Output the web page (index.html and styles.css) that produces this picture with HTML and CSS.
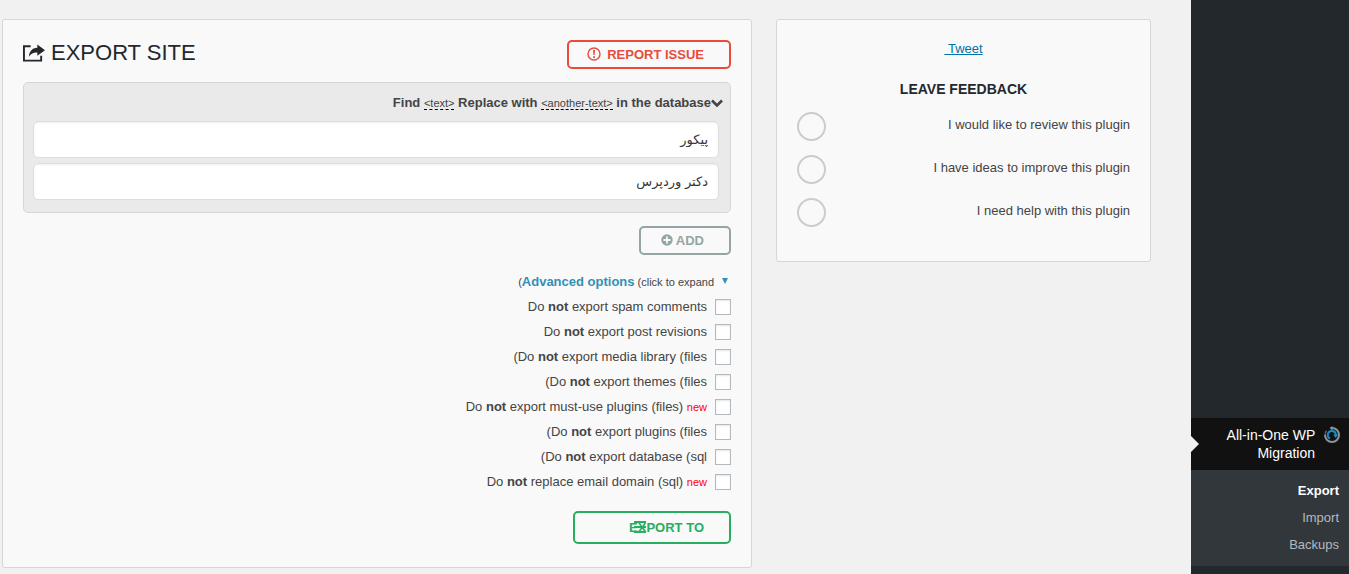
FILE: index.html
```html
<!DOCTYPE html>
<html lang="en" dir="rtl">
<head>
  <meta charset="UTF-8">
  <meta name="viewport" content="width=device-width, initial-scale=1.0">
  <title>Export Site</title>
  <link rel="stylesheet" href="styles.css">
</head>
<body>
  <nav class="admin-menu">
    <a class="menu-current" href="#">
      <svg class="menu-icon" viewBox="0 0 18 18" fill="none">
        <path d="M9 2A7 7 0 1 1 2 9" stroke="#8e9396" stroke-width="2"/>
        <path d="M9.500 0v4.500L6.500 2z" fill="#8e9396"/>
        <path d="M2 9a7 7 0 0 1 1.500-4.300" stroke="#5c6165" stroke-width="1.500"/>
        <path d="M7 12.500A4 4 0 1 1 12.800 9" stroke="#0e8fd0" stroke-width="2"/>
        <path d="M10 8.500h5.200l-2.600 3.500z" fill="#0e8fd0"/>
      </svg>
      <span>All-in-One WP Migration</span>
    </a>
    <ul class="submenu">
      <li><a class="current" href="#">Export</a></li>
      <li><a href="#">Import</a></li>
      <li><a href="#">Backups</a></li>
    </ul>
  </nav>

  <div class="content">
    <aside class="card feedback">
      <p class="share"><a href="#">Tweet&nbsp;</a></p>
      <h2>Leave Feedback</h2>
      <ul class="feedback-types">
        <li><label for="review">I would like to review this plugin</label><input type="radio" name="feedback" id="review"></li>
        <li><label for="ideas">I have ideas to improve this plugin</label><input type="radio" name="feedback" id="ideas"></li>
        <li><label for="help">I need help with this plugin</label><input type="radio" name="feedback" id="help"></li>
      </ul>
    </aside>

    <main class="card export">
      <div class="export-header">
        <h1>
          Export Site
          <svg class="share-icon" viewBox="0 0 23 18">
            <path d="M8 2H1v15h18v-5" fill="none" stroke="#23282d" stroke-width="2"/>
            <path d="M15 0l8 6-8 6V8.500C11 8.300 8.500 9.500 6.200 13 6.400 7.500 9.500 3.800 15 3.500z" fill="#23282d"/>
          </svg>
        </h1>
        <button type="button" class="btn btn-red">
          Report issue
          <svg class="alert-icon" viewBox="0 0 14 14">
            <circle cx="7" cy="7" r="6" fill="none" stroke="currentColor" stroke-width="1.400"/>
            <path d="M6 3h2l-.4 5H6.400zM6.100 9.200h1.800v1.800H6.100z" fill="currentColor"/>
          </svg>
        </button>
      </div>

      <section class="find-replace">
        <h3>
          <svg class="chevron-icon" viewBox="0 0 12 8">
            <path d="M1 1.500l5 5 5-5" fill="none" stroke="currentColor" stroke-width="2.600"/>
          </svg>
          <span dir="ltr">Find <small>&lt;text&gt;</small> Replace with <small>&lt;another-text&gt;</small> in the database</span>
        </h3>
        <input type="text" aria-label="Find" value="پیکور">
        <input type="text" aria-label="Replace with" value="دکتر وردپرس">
      </section>

      <button type="button" class="btn btn-gray">
        Add
        <svg class="plus-icon" viewBox="0 0 12 12">
          <circle cx="6" cy="6" r="5.700" fill="currentColor"/>
          <path d="M6 2.500v7M2.500 6h7" stroke="#f9f9f9" stroke-width="1.800"/>
        </svg>
      </button>

      <section class="advanced">
        <h4>
          <span class="arrow"></span>
          <span><bdi><a href="#">Advanced options</a> (click to expand</bdi>)</span>
        </h4>
        <ul>
          <li><label><input type="checkbox"><span>Do <b>not</b> export spam comments</span></label></li>
          <li><label><input type="checkbox"><span>Do <b>not</b> export post revisions</span></label></li>
          <li><label><input type="checkbox"><span><bdi>Do <b>not</b> export media library (files</bdi>)</span></label></li>
          <li><label><input type="checkbox"><span><bdi>Do <b>not</b> export themes (files</bdi>)</span></label></li>
          <li><label><input type="checkbox"><span>Do <b>not</b> export must-use plugins (files) <small>new</small></span></label></li>
          <li><label><input type="checkbox"><span><bdi>Do <b>not</b> export plugins (files</bdi>)</span></label></li>
          <li><label><input type="checkbox"><span><bdi>Do <b>not</b> export database (sql</bdi>)</span></label></li>
          <li><label><input type="checkbox"><span>Do <b>not</b> replace email domain (sql) <small>new</small></span></label></li>
        </ul>
      </section>

      <button type="button" class="btn btn-green">
        Export to
        <svg class="lines-icon" viewBox="0 0 12 12">
          <path d="M0 1h12M0 6h12M0 11h12" stroke="currentColor" stroke-width="2"/>
        </svg>
      </button>
    </main>
  </div>
</body>
</html>
```
FILE: styles.css
```css
* {
  box-sizing: border-box;
}

body {
  display: flex;
  min-height: 100vh;
  margin: 0;
  background: #f1f1f1;
  color: #444;
  font: 13px/18px "Liberation Sans", Arial, "DejaVu Sans", sans-serif;
}

h1, h2, h3, h4, p, ul {
  margin: 0;
  padding: 0;
}

ul {
  list-style: none;
}

svg {
  flex: none;
}

/* admin menu */
.admin-menu {
  display: flex;
  flex-direction: column;
  justify-content: flex-end;
  flex: none;
  width: 158px;
  padding-bottom: 8px;
  background: #23282d;
}

.admin-menu a {
  text-decoration: none;
}

.menu-current {
  position: relative;
  display: flex;
  gap: 8px;
  padding: 8px;
  background: #111;
  color: #fff;
  font-size: 14px;
}

.menu-current span {
  width: 96px;
}

.menu-current::after {
  content: "";
  position: absolute;
  left: 0;
  top: 18px;
  border: 8px solid transparent;
  border-left-color: #f1f1f1;
  border-right-width: 0;
}

.menu-icon {
  width: 18px;
  height: 18px;
}

.submenu {
  padding: 7px 10px 8px;
  background: #32373c;
}

.submenu a {
  display: block;
  color: #b4b9be;
  line-height: 27px;
}

.submenu .current {
  color: #fff;
  font-weight: bold;
}

/* content */
.content {
  display: grid;
  flex: 1;
  grid-template-columns: 1fr 2fr;
  align-items: start;
  gap: 24px;
  padding: 19px 40px 6px 2px;
}

.card {
  min-width: 0;
  padding: 20px;
  border: 1px solid #d6d6d6;
  border-radius: 3px;
  background: #f9f9f9;
}

.feedback {
  padding-bottom: 34px;
}

.share {
  text-align: center;
}

.share a {
  color: #0073aa;
}

.feedback h2 {
  margin: 22px 0 14px;
  color: #23282d;
  font-size: 14px;
  line-height: 18px;
  text-align: center;
  text-transform: uppercase;
}

.feedback-types {
  display: grid;
  gap: 14px;
}

.feedback-types li {
  display: flex;
  align-items: center;
  justify-content: space-between;
}

.feedback-types label {
  padding-bottom: 3px;
}

.feedback-types input {
  appearance: none;
  width: 29px;
  height: 29px;
  margin: 0;
  border: 2px solid #ccc;
  border-radius: 50%;
}

.export {
  display: flex;
  flex-direction: column;
  align-items: flex-start;
  padding-bottom: 23px;
}

.export-header {
  display: flex;
  flex-direction: row-reverse;
  align-self: stretch;
  justify-content: space-between;
  align-items: flex-start;
  margin-bottom: 13px;
}

h1 {
  display: flex;
  align-items: center;
  gap: 6px;
  color: #23282d;
  font-size: 22px;
  font-weight: normal;
  line-height: 26px;
  text-transform: uppercase;
}

.share-icon {
  width: 22px;
  height: 18px;
}

.btn {
  display: flex;
  align-items: center;
  height: 29px;
  padding: 0 25px 0 18px;
  border: 2px solid;
  border-radius: 5px;
  background: transparent;
  font: bold 13px "Liberation Sans", Arial, sans-serif;
  text-transform: uppercase;
}

.btn svg {
  margin-bottom: 2px;
}

.btn-red {
  gap: 6px;
  color: #e74c3c;
}

.btn-gray {
  gap: 3px;
  padding-left: 20px;
  color: #95a5a6;
}

.btn-green {
  position: relative;
  height: 33px;
  padding-left: 54px;
  color: #27ae60;
}

.alert-icon {
  width: 14px;
  height: 14px;
}

.plus-icon {
  width: 12px;
  height: 12px;
}

.lines-icon {
  position: absolute;
  left: 59px;
  top: 8px;
  width: 12px;
  height: 12px;
}

.find-replace {
  display: grid;
  align-self: stretch;
  gap: 5px;
  margin-bottom: 13px;
  padding: 11px 11px 12px 9px;
  border: 1px solid #d6d6d6;
  border-radius: 5px;
  background: #eaeaea;
}

.find-replace h3 {
  display: flex;
  align-items: center;
  margin: 0 -4px 4px 0;
  font-size: 13px;
  line-height: 18px;
}

.find-replace small {
  border-bottom: 1px dashed #000;
  font-size: 11px;
  font-weight: normal;
}

.chevron-icon {
  width: 12px;
  height: 8px;
}

.find-replace input {
  width: 100%;
  height: 37px;
  padding: 0 10px;
  border: 1px solid #ddd;
  border-radius: 5px;
  background: #fff;
  box-shadow: inset 0 1px 2px rgba(0, 0, 0, 0.07);
  color: #32373c;
  font: 13px "Liberation Sans", "DejaVu Sans", sans-serif;
}

.advanced {
  margin: 18px 0 21px;
}

.advanced h4 {
  display: flex;
  align-items: center;
  gap: 8px;
  margin-bottom: 8px;
  padding-right: 3px;
  font-size: 11px;
  font-weight: normal;
  line-height: 18px;
}

.advanced h4 a {
  color: #338fb8;
  font-size: 13px;
  font-weight: bold;
  text-decoration: none;
}

.arrow {
  margin-bottom: 3px;
  border: 3px solid transparent;
  border-top: 6px solid #338fb8;
  border-bottom: 0;
}

.advanced ul {
  display: grid;
  gap: 9px;
}

.advanced label {
  display: flex;
  align-items: center;
  gap: 8px;
  line-height: 16px;
}

.advanced input {
  appearance: none;
  width: 16px;
  height: 16px;
  margin: 0;
  border: 1px solid #b4b9be;
  background: #fff;
  box-shadow: inset 0 1px 2px rgba(0, 0, 0, 0.1);
}

.advanced small {
  color: #f00;
  font-size: 11px;
}
```
